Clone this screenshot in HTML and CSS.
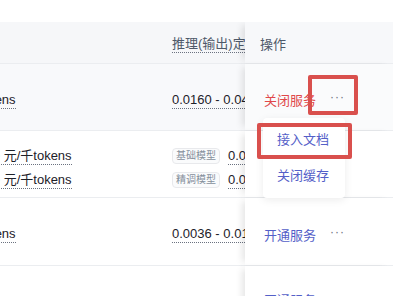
FILE: index.html
```html
<!DOCTYPE html>
<html lang="zh-CN">
<head>
    <meta charset="UTF-8">
    <meta name="viewport" content="width=device-width, initial-scale=1.0">
    <title>模型服务</title>
    <link rel="stylesheet" href="styles.css">
</head>
<body>

    <div class="table">
        <div class="row head">
            <div class="cell c1"><span class="tip">推理(输入)定价</span></div>
            <div class="cell c2"><span class="tip">推理(输出)定价</span></div>
            <div class="cell fixed">操作</div>
        </div>

        <div class="row hover">
            <div class="cell c1"><span class="tip">0.0080 - 0.0240 元/千tokens</span></div>
            <div class="cell c2"><span class="tip">0.0160 - 0.0480 元/千tokens</span></div>
            <div class="cell fixed">
                <a class="action red">关闭服务</a>
                <span class="more">···</span>
                <span class="mark mark-more"></span>
                <div class="menu">
                    <div class="menu-item">接入文档</div>
                    <div class="menu-item">关闭缓存</div>
                    <span class="mark mark-doc"></span>
                </div>
            </div>
        </div>

        <div class="row">
            <div class="cell c1 lines">
                <div class="line"><span class="tag">基础模型</span><span class="tip">0.0040 - 0.0120 元/千tokens</span></div>
                <div class="line"><span class="tag">精调模型</span><span class="tip">0.0060 - 0.0180 元/千tokens</span></div>
            </div>
            <div class="cell c2 lines">
                <div class="line"><span class="tag">基础模型</span><span class="tip">0.0080 - 0.0240 元/千tokens</span></div>
                <div class="line"><span class="tag">精调模型</span><span class="tip">0.0120 - 0.0360 元/千tokens</span></div>
            </div>
            <div class="cell fixed"></div>
        </div>

        <div class="row tall">
            <div class="cell c1"><span class="tip">0.0012 - 0.0048 元/千tokens</span></div>
            <div class="cell c2"><span class="tip">0.0036 - 0.0144 元/千tokens</span></div>
            <div class="cell fixed">
                <a class="action">开通服务</a>
                <span class="more">···</span>
            </div>
        </div>

        <div class="row last">
            <div class="cell c1"></div>
            <div class="cell c2"></div>
            <div class="cell fixed">
                <a class="action">开通服务</a>
                <span class="more">···</span>
            </div>
        </div>
    </div>

</body>
</html>
```

FILE: styles.css
```css
body {
    font-family: "Liberation Sans", "Noto Sans CJK SC", sans-serif;
    font-size: 13px;
    color: #1d2129;
    background-color: #fff;
    margin: 0;
    padding-top: 22px;
    overflow: hidden;
}

.table {
    width: 393px;
    overflow: hidden;
}

.row {
    display: flex;
    height: 67px;
    box-sizing: border-box;
    border-bottom: 1px solid #ebedf0;
}

.row.head {
    height: 42px;
    background-color: #f6f7f9;
    color: #4e5969;
}

.row.hover {
    background-color: #f8f9fb;
}

.row.tall {
    height: 68px;
}

.cell {
    display: flex;
    align-items: center;
    box-sizing: border-box;
    padding: 5px 12px 0;
    white-space: nowrap;
    overflow: hidden;
    flex-shrink: 0;
}

.head .cell {
    padding-top: 2px;
}

.last .cell {
    padding-top: 0;
}

.c1 {
    width: 319px;
    margin-left: -159px;
}

.c2 {
    width: 85px;
}

.lines {
    flex-direction: column;
    align-items: flex-start;
    justify-content: center;
    gap: 8px;
    padding-top: 8px;
}

.line {
    display: flex;
    align-items: center;
    gap: 8px;
    height: 16px;
}

.tip {
    border-bottom: 1px dotted #6b7280;
    line-height: 17px;
}

.tag {
    font-size: 10px;
    line-height: 14px;
    padding: 0 3px;
    border: 1px solid #e8e9ec;
    border-radius: 4px;
    background-color: #fafbfc;
    color: #86909c;
}

.fixed {
    width: 148px;
    padding-left: 19px;
    overflow: visible;
    position: relative;
    background-color: #fff;
    box-shadow: -6px 0 7px -3px rgba(0, 0, 0, 0.1);
    gap: 14px;
}

.head .fixed {
    background-color: #f7f8fa;
    padding-left: 15px;
}

.hover .fixed {
    background-color: #fafbfc;
}

.action {
    color: #5460c8;
}

.action.red {
    color: #e0484a;
}

.more {
    color: #6b7280;
    font-size: 12px;
    letter-spacing: 1px;
    margin-top: -5px;
}

.menu {
    position: absolute;
    top: 54px;
    left: 18px;
    width: 82px;
    padding: 4px 0;
    background-color: #fff;
    border-radius: 4px;
    box-shadow: 0 2px 8px rgba(0, 0, 0, 0.08);
    z-index: 2;
}

.menu-item {
    height: 36px;
    line-height: 36px;
    padding-left: 14px;
    color: #5460c8;
}

.mark {
    position: absolute;
    border: 4px solid #d9504d;
    border-radius: 2px;
    box-sizing: border-box;
    z-index: 3;
}

.mark-more {
    left: 63px;
    top: 11px;
    width: 50px;
    height: 40px;
}

.mark-doc {
    left: -6px;
    top: 5px;
    width: 95px;
    height: 36px;
}
```
